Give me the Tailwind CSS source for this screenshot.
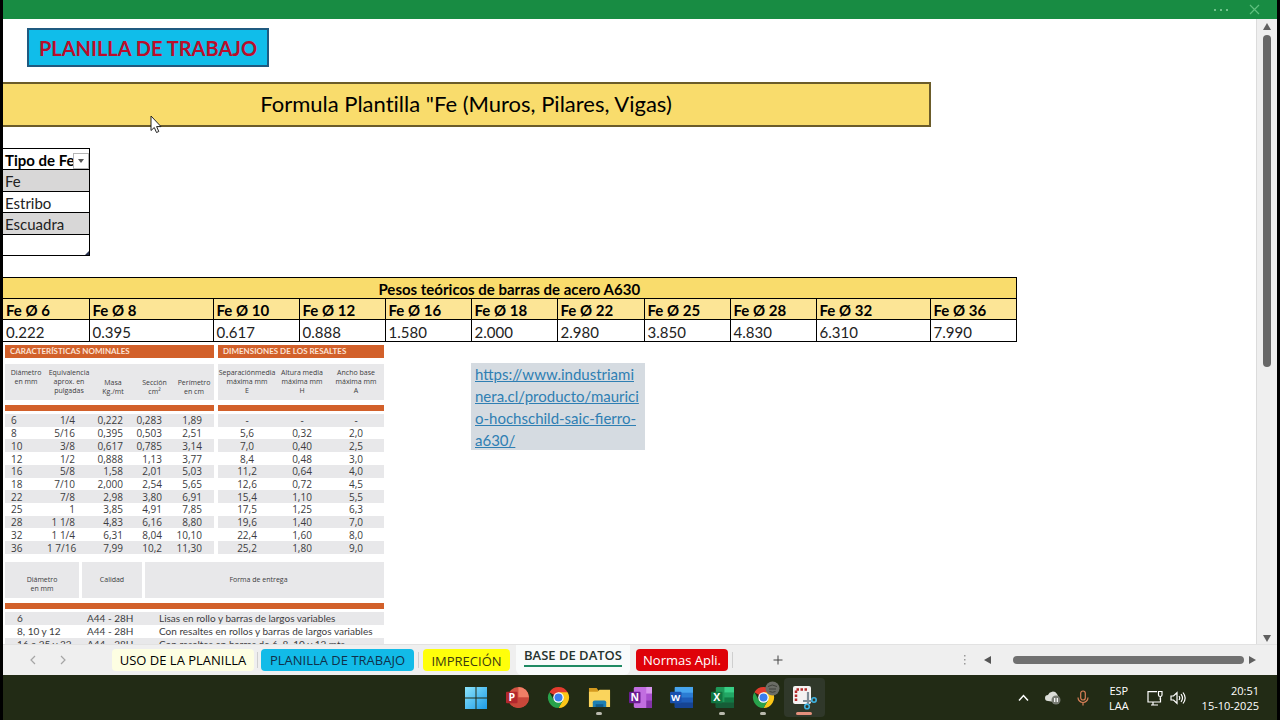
<!DOCTYPE html>
<html lang="es">
<head>
  <meta charset="UTF-8" />
  <meta name="viewport" content="width=device-width, initial-scale=1.0"/>
  <title>Base de datos</title>
  <script src="https://cdn.jsdelivr.net/npm/@tailwindcss/browser@4"></script>
  <script>
    const nominales = [
      ['6', '1/4', '0,222', '0,283', '1,89'],
      ['8', '5/16', '0,395', '0,503', '2,51'],
      ['10', '3/8', '0,617', '0,785', '3,14'],
      ['12', '1/2', '0,888', '1,13', '3,77'],
      ['16', '5/8', '1,58', '2,01', '5,03'],
      ['18', '7/10', '2,000', '2,54', '5,65'],
      ['22', '7/8', '2,98', '3,80', '6,91'],
      ['25', '1', '3,85', '4,91', '7,85'],
      ['28', '1 1/8', '4,83', '6,16', '8,80'],
      ['32', '1 1/4', '6,31', '8,04', '10,10'],
      ['36', '1 7/16', '7,99', '10,2', '11,30'],
    ];
    const resaltes = [
      ['-', '-', '-'],
      ['5,6', '0,32', '2,0'],
      ['7,0', '0,40', '2,5'],
      ['8,4', '0,48', '3,0'],
      ['11,2', '0,64', '4,0'],
      ['12,6', '0,72', '4,5'],
      ['15,4', '1,10', '5,5'],
      ['17,5', '1,25', '6,3'],
      ['19,6', '1,40', '7,0'],
      ['22,4', '1,60', '8,0'],
      ['25,2', '1,80', '9,0'],
    ];
    const pesos = [
      ['Fe Ø 6', '0.222'], ['Fe Ø 8', '0.395'], ['Fe Ø 10', '0.617'], ['Fe Ø 12', '0.888'],
      ['Fe Ø 16', '1.580'], ['Fe Ø 18', '2.000'], ['Fe Ø 22', '2.980'], ['Fe Ø 25', '3.850'],
      ['Fe Ø 28', '4.830'], ['Fe Ø 32', '6.310'], ['Fe Ø 36', '7.990'],
    ];

    function filas(datos, clases) {
      return datos.map(fila => `
        <tr class="odd:bg-[#e8e8ea]">
          ${fila.map((v, i) => `<td class="${clases[i]}">${v}</td>`).join('')}
        </tr>`).join('');
    }

    document.addEventListener('DOMContentLoaded', () => {
      document.getElementById('nominales').innerHTML =
        filas(nominales, ['pl-1.5 text-left', 'pr-4 text-right', 'pr-3 text-right', 'pr-3 text-right', 'pr-3 text-right']);
      document.getElementById('resaltes').innerHTML =
        filas(resaltes, ['text-center', 'text-center', 'text-center']);
      document.getElementById('pesos-nombres').innerHTML =
        pesos.map(p => `<th scope="col" class="border border-black border-l-0 pt-0.5 pl-[3px] text-left font-bold">${p[0]}</th>`).join('');
      document.getElementById('pesos-valores').innerHTML =
        pesos.map(p => `<td class="border border-black border-l-0 pt-0.5 pl-[3px]">${p[1]}</td>`).join('');
    });
  </script>
</head>
<body class="h-screen flex flex-col overflow-hidden bg-black px-[3px] text-black font-['Lato','Liberation_Sans',sans-serif]">

  <!-- Barra de título -->
  <header class="h-[19px] shrink-0 bg-[#188c43] flex items-center justify-end gap-5 pr-4 text-[#8fd6a5]">
    <button aria-label="Más opciones" class="flex gap-1">
      <span class="size-0.5 rounded-full bg-current"></span><span class="size-0.5 rounded-full bg-current"></span><span class="size-0.5 rounded-full bg-current"></span>
    </button>
    <button aria-label="Cerrar">
      <svg class="size-[13px]" viewBox="0 0 13 13" fill="none" stroke="#5fc07e" stroke-width="1.2"><path d="M2 2l9 9M11 2l-9 9"/></svg>
    </button>
  </header>

  <div class="flex-1 min-h-0 flex bg-[#efefef]">
    <!-- Hoja -->
    <main class="relative flex-1 min-w-0 overflow-hidden bg-white pt-[9px]">
      <button class="ml-6 block w-[242px] h-[39px] border-2 border-[#1f5a80] bg-[#10bdea] text-[20px] leading-9 font-bold text-[#bb0d2b]">PLANILLA DE TRABAJO</button>

      <h1 class="mt-[15px] w-[928px] h-[45px] border-2 border-l-0 border-[#6b5c2a] bg-[#f9dc6c] text-center text-[22px] leading-10 [font-variant-ligatures:none]">Formula Plantilla "Fe (Muros, Pilares, Vigas)</h1>

      <table class="mt-[21px] w-[87px] h-[108px] table-fixed border-collapse text-[15px] leading-[18px] text-[#222]">
        <thead>
          <tr>
            <th scope="col" class="relative border border-l-0 border-black pt-0.5 pl-0.5 text-left font-bold whitespace-nowrap text-black">Tipo de Fe
              <button aria-label="Filtrar" class="absolute right-0 bottom-0 size-4 border border-[#b5b5b5] bg-white flex items-center justify-center">
                <svg class="w-2 h-1" viewBox="0 0 8 4"><path d="M1 0h6L4 4z" fill="#555"/></svg>
              </button>
            </th>
          </tr>
        </thead>
        <tbody>
          <tr><td class="border border-l-0 border-black bg-[#d8d7d7] pt-0.5 pl-0.5">Fe</td></tr>
          <tr><td class="border border-l-0 border-black pt-0.5 pl-0.5">Estribo</td></tr>
          <tr><td class="border border-l-0 border-black bg-[#d8d7d7] pt-0.5 pl-0.5">Escuadra</td></tr>
          <tr>
            <td class="relative border border-l-0 border-black pt-0.5 pl-0.5">&nbsp;
              <svg class="absolute right-0 bottom-0 size-1" viewBox="0 0 4 4"><path d="M4 0v4H0z" fill="#27304d"/></svg>
            </td>
          </tr>
        </tbody>
      </table>

      <table class="mt-[21px] w-[1013px] h-[65px] table-fixed border-collapse text-[15px] leading-[18px] text-[#222]">
        <colgroup>
          <col class="w-[86px]"><col class="w-[124px]"><col class="w-[86px]"><col class="w-[86px]"><col class="w-[86px]"><col class="w-[86px]"><col class="w-[87px]"><col class="w-[86px]"><col class="w-[86px]"><col class="w-[114px]"><col class="w-[86px]">
        </colgroup>
        <thead class="text-black">
          <tr><th colspan="11" class="border border-l-0 border-black bg-[#f9dc6c] pt-0.5 text-center font-bold">Pesos teóricos de barras de acero A630</th></tr>
          <tr id="pesos-nombres" class="bg-[#fce596]"></tr>
        </thead>
        <tbody>
          <tr id="pesos-valores"></tr>
        </tbody>
      </table>

      <div class="mt-[3px] flex items-start">
        <!-- Catálogo de barras -->
        <div class="ml-0.5 w-[379px] font-['Open_Sans','Liberation_Sans',sans-serif] text-[10px] leading-3 text-[#3c3c40]">
          <div class="flex gap-1">
            <section class="w-[209px]">
              <h2 class="h-[13px] bg-[#d2602a] pl-[5px] font-['Lato',sans-serif] text-[8px] leading-3 font-bold text-[#fbe3d6]">CARACTERÍSTICAS NOMINALES</h2>
              <table class="mt-1.5 w-full table-fixed border-collapse">
                <colgroup><col class="w-[42px]"><col class="w-[44px]"><col class="w-[44px]"><col class="w-[39px]"><col class="w-[40px]"></colgroup>
                <thead class="bg-[#e8e8ea] text-[7px] leading-[9px]">
                  <tr class="h-9">
                    <th scope="col" class="pt-1 align-top font-normal">Diámetro<br>en mm</th>
                    <th scope="col" class="pt-1 align-top font-normal">Equivalencia<br>aprox. en<br>pulgadas</th>
                    <th scope="col" class="pb-1 align-bottom font-normal">Masa<br>Kg./mt</th>
                    <th scope="col" class="pb-1 align-bottom font-normal">Sección<br>cm²</th>
                    <th scope="col" class="pb-1 align-bottom font-normal">Perímetro<br>en cm</th>
                  </tr>
                </thead>
              </table>
              <div class="mt-[5px] mb-[3px] h-1.5 bg-[#d2602a]"></div>
              <table class="w-full h-[140px] table-fixed border-collapse whitespace-nowrap">
                <colgroup><col class="w-[42px]"><col class="w-[44px]"><col class="w-[44px]"><col class="w-[39px]"><col class="w-[40px]"></colgroup>
                <tbody id="nominales"></tbody>
              </table>
            </section>
            <section class="w-[166px]">
              <h2 class="h-[13px] bg-[#d2602a] pl-[5px] font-['Lato',sans-serif] text-[8px] leading-3 font-bold text-[#fbe3d6]">DIMENSIONES DE LOS RESALTES</h2>
              <table class="mt-1.5 w-full table-fixed border-collapse">
                <colgroup><col class="w-[58px]"><col class="w-[52px]"><col class="w-[56px]"></colgroup>
                <thead class="bg-[#e8e8ea] text-[7px] leading-[9px]">
                  <tr class="h-9">
                    <th scope="col" class="pt-1 align-top font-normal whitespace-nowrap">Separaciónmedia<br>máxima mm<br>E</th>
                    <th scope="col" class="pt-1 align-top font-normal whitespace-nowrap">Altura media<br>máxima mm<br>H</th>
                    <th scope="col" class="pt-1 align-top font-normal whitespace-nowrap">Ancho base<br>máxima mm<br>A</th>
                  </tr>
                </thead>
              </table>
              <div class="mt-[5px] mb-[3px] h-1.5 bg-[#d2602a]"></div>
              <table class="w-full h-[140px] table-fixed border-collapse whitespace-nowrap">
                <colgroup><col class="w-[58px]"><col class="w-[52px]"><col class="w-[56px]"></colgroup>
                <tbody id="resaltes"></tbody>
              </table>
            </section>
          </div>

          <div class="mt-2 grid grid-cols-[74px_60px_1fr] gap-[3px] text-center text-[7px] leading-[9px]">
            <div class="h-9 bg-[#e8e8ea] pt-[13px]">Diámetro<br>en mm</div>
            <div class="h-9 bg-[#e8e8ea] pt-[13px]">Calidad</div>
            <div class="h-9 bg-[#e8e8ea] pt-[13px] pr-3">Forma de entrega</div>
          </div>
          <div class="mt-[5px] mb-[3px] h-1.5 bg-[#d2602a]"></div>
          <table class="w-full table-fixed border-collapse font-['Lato',sans-serif]">
            <colgroup><col class="w-[82px]"><col class="w-[72px]"><col></colgroup>
            <tbody class="whitespace-nowrap leading-[13px]">
              <tr class="bg-[#e8e8ea]"><td class="pl-3">6</td><td>A44 - 28H</td><td>Lisas en rollo y barras de largos variables</td></tr>
              <tr><td class="pl-3">8, 10 y 12</td><td>A44 - 28H</td><td>Con resaltes en rollos y barras de largos variables</td></tr>
              <tr class="bg-[#e8e8ea]"><td class="pl-3">16 a 25 y 32</td><td>A44 - 28H</td><td>Con resaltes en barras de 6, 8, 10 y 12 mts</td></tr>
            </tbody>
          </table>
        </div>

        <a href="https://www.industriaminera.cl/producto/mauricio-hochschild-saic-fierro-a630/" class="mt-[18px] ml-[87px] w-[174px] h-[87px] bg-[#d5dbe1] pl-1 text-[15px] leading-[22px] whitespace-nowrap text-[#2f7fb3] underline">https://www.industriami<br>nera.cl/producto/maurici<br>o-hochschild-saic-fierro-<br>a630/</a>
      </div>

      <!-- Puntero -->
      <svg class="absolute left-[147px] top-[96px] w-3 h-[19px]" viewBox="0 0 12 19"><path d="M1 1v14.500l3.300-3 2.200 5 2.300-1-2.200-4.900H11z" fill="#fff" stroke="#222" stroke-width="1"/></svg>
    </main>

    <!-- Barra vertical -->
    <div class="w-[21px] shrink-0 border-l border-[#dcdcdc] flex flex-col items-center pt-1 pb-px">
      <svg class="size-2" viewBox="0 0 8 8"><path d="M4 0l4 7H0z" fill="#606060"/></svg>
      <div class="mt-1 h-[332px] w-2 rounded-full bg-[#686868]"></div>
      <svg class="mt-auto size-2" viewBox="0 0 8 8"><path d="M0 0h8L4 7z" fill="#606060"/></svg>
    </div>
  </div>

  <!-- Pestañas -->
  <nav class="h-[31px] shrink-0 bg-[#efefef] border-t border-[#e2e2e2] flex items-center font-['Open_Sans','Liberation_Sans',sans-serif] text-[13px] leading-5">
    <button aria-label="Hoja anterior" class="ml-6"><svg class="w-3 h-3" viewBox="0 0 12 12" fill="none" stroke="#a5a5a5" stroke-width="1.200"><path d="M8 2L4 6l4 4"/></svg></button>
    <button aria-label="Hoja siguiente" class="ml-[18px]"><svg class="w-3 h-3" viewBox="0 0 12 12" fill="none" stroke="#a5a5a5" stroke-width="1.200"><path d="M4 2l4 4-4 4"/></svg></button>
    <button class="ml-[43px] w-[142px] h-[22px] rounded bg-[#fdfee2] leading-[18px]">USO DE LA PLANILLA</button>
    <span class="mx-[3px] h-4 w-px bg-[#cfcfcf]"></span>
    <button class="w-[153px] h-[22px] rounded bg-[#12bbe8] leading-[18px] text-[#10304a]">PLANILLA DE TRABAJO</button>
    <span class="mx-1 h-4 w-px bg-[#cfcfcf]"></span>
    <button class="w-[87px] h-[22px] rounded bg-[#ffff0a] pt-0.5 text-[#3a3a10]">IMPRECIÓN</button>
    <button class="ml-1.5 h-full w-[114px] rounded-b-md bg-[#f9fbfb] flex justify-center font-semibold text-[#26332e]"><span class="h-[22px] border-b-2 border-[#1f8a63]">BASE DE DATOS</span></button>
    <button class="ml-1.5 w-[92px] h-[22px] rounded bg-[#df0209] leading-[18px] text-white">Normas Apli.</button>
    <span class="mx-1 h-4 w-px bg-[#cfcfcf]"></span>
    <button aria-label="Nueva hoja" class="ml-9"><svg class="size-[10px]" viewBox="0 0 10 10" stroke="#444" stroke-width="1"><path d="M5 .500v9M.500 5h9"/></svg></button>
    <div class="ml-auto flex items-center pr-[21px]">
      <svg class="w-0.5 h-[10px]" viewBox="0 0 2 10" fill="#999"><path d="M0 0h1.500v1.500H0zM0 4h1.500v1.500H0zM0 8h1.500v1.500H0z"/></svg>
      <svg class="ml-[18px] size-2" viewBox="0 0 8 8"><path d="M7 0v8L0 4z" fill="#555"/></svg>
      <div class="ml-[21px] h-2 w-[231px] rounded-full bg-[#707070]"></div>
      <svg class="ml-1 size-2" viewBox="0 0 8 8"><path d="M1 0v8l7-4z" fill="#606060"/></svg>
    </div>
  </nav>

  <!-- Barra de tareas -->
  <footer class="h-[45px] shrink-0 bg-[#222b15] grid grid-cols-[1fr_auto_1fr] items-stretch text-white font-['Open_Sans','Liberation_Sans',sans-serif]">
    <div></div>
    <div class="flex">
      <button aria-label="Inicio" class="w-[41px] flex justify-center pt-3"><svg class="size-[22px]" viewBox="0 0 22 22"><defs><linearGradient id="win" x1="0" y1="0" x2="1" y2="1"><stop stop-color="#8ce4fb"/><stop offset="1" stop-color="#1c9be8"/></linearGradient></defs><path d="M0 0h10.500v10.500H0zM11.500 0H22v10.500H11.500zM0 11.500h10.500V22H0zM11.500 11.500H22V22H11.500z" fill="url(#win)"/></svg></button>
      <button aria-label="PowerPoint" class="w-[41px] flex justify-center pt-[11px]"><svg class="size-[23px]" viewBox="0 0 24 24"><circle cx="13" cy="12" r="11" fill="#d35343"/><path d="M13 1a11 11 0 0 1 11 11H13z" fill="#f07f66"/><path d="M2 12h22a11 11 0 0 1-22 0z" fill="#c9473a"/><rect y="6" width="12" height="12" rx="1" fill="#b3272d"/><text x="6" y="16" text-anchor="middle" font-size="11" font-weight="700" fill="#fff">P</text></svg></button>
      <button aria-label="Chrome" class="w-[41px] flex justify-center pt-[11px]"><svg class="size-[23px]" viewBox="0 0 24 24"><path d="M12 12L2.470 6.500A11 11 0 0 1 21.530 6.500z" fill="#e33b2e"/><path d="M21.530 6.500A11 11 0 0 1 12 23l4.800-8.300L12 6.500z" fill="#fbc618"/><path d="M2.470 6.500A11 11 0 0 0 12 23l4.760-8.250L12 12l-4.760 2.750z" fill="#28a24b"/><circle cx="12" cy="12" r="5.500" fill="#fff"/><circle cx="12" cy="12" r="4.200" fill="#3b7ded"/></svg></button>
      <button aria-label="Explorador de archivos" class="w-[41px] flex flex-col items-center pt-[11px]"><svg class="size-[23px]" viewBox="0 0 24 24"><path d="M1 2h8l2 3h12v17H1z" fill="#d49a1f"/><path d="M1 6h9l2-2h11v18H1z" fill="#fad45c"/><path d="M5 22v-5q0-2 2-2h10q2 0 2 2v5z" fill="#1d7fb3"/><path d="M8 19h8v3H8z" fill="#125a8a"/></svg><span class="mt-[3px] h-[3px] w-1.5 rounded-full bg-[#b9b9ad]"></span></button>
      <button aria-label="OneNote" class="w-[41px] flex justify-center pt-[11px]"><svg class="size-[23px]" viewBox="0 0 24 24"><rect x="5" y="1" width="19" height="22" rx="1.500" fill="#c26ee0"/><path d="M18 1h6v7h-6z" fill="#d895ee"/><path d="M18 8h6v7h-6z" fill="#a94fce"/><path d="M18 15h6v8h-6z" fill="#8433a8"/><rect y="6" width="12" height="12" rx="1" fill="#6c1c94"/><text x="6" y="16" text-anchor="middle" font-size="11" font-weight="700" fill="#fff">N</text></svg></button>
      <button aria-label="Word" class="w-[41px] flex justify-center pt-[11px]"><svg class="size-[23px]" viewBox="0 0 24 24"><rect x="5" y="1" width="19" height="22" rx="1.500" fill="#2b7cd3"/><path d="M5 1h19v6H5z" fill="#47a5ee"/><path d="M5 12h19v5H5z" fill="#1e5cb8"/><path d="M5 17h19v6H5z" fill="#164494"/><rect y="6" width="12" height="12" rx="1" fill="#1950ad"/><text x="6" y="16" text-anchor="middle" font-size="10" font-weight="700" fill="#fff">W</text></svg></button>
      <button aria-label="Excel" class="w-[41px] flex flex-col items-center pt-[11px]"><svg class="size-[23px]" viewBox="0 0 24 24"><rect x="5" y="1" width="19" height="22" rx="1.500" fill="#1f9a5a"/><path d="M14 1h10v6H14z" fill="#38cf86"/><path d="M14 7h10v5H14z" fill="#22a765"/><path d="M14 12h10v5H14z" fill="#127a45"/><path d="M5 17h19v6H5z" fill="#165c37"/><rect y="6" width="12" height="12" rx="1" fill="#107641"/><text x="6" y="16" text-anchor="middle" font-size="11" font-weight="700" fill="#fff">X</text></svg><span class="mt-[3px] h-[3px] w-1.5 rounded-full bg-[#b9b9ad]"></span></button>
      <button aria-label="Chrome, perfil" class="relative w-[41px] flex flex-col items-center pt-[11px]"><svg class="size-[23px]" viewBox="0 0 24 24"><path d="M12 12L2.470 6.500A11 11 0 0 1 21.530 6.500z" fill="#e33b2e"/><path d="M21.530 6.500A11 11 0 0 1 12 23l4.800-8.300L12 6.500z" fill="#fbc618"/><path d="M2.470 6.500A11 11 0 0 0 12 23l4.760-8.250L12 12l-4.760 2.750z" fill="#28a24b"/><circle cx="12" cy="12" r="5.500" fill="#fff"/><circle cx="12" cy="12" r="4.200" fill="#3b7ded"/></svg><svg class="absolute left-[22px] top-1.5 size-[15px]" viewBox="0 0 15 15"><circle cx="7.500" cy="7.500" r="7" fill="#6b6d66"/><path d="M3 5.500q4-3 9 0M4 8h7M4.500 10.500q3 1.500 6 0" fill="none" stroke="#3f413b" stroke-width="1"/></svg><span class="mt-[3px] h-[3px] w-1.5 rounded-full bg-[#b9b9ad]"></span></button>
      <button aria-label="Recortes" class="my-[3px] w-[41px] rounded bg-[#30382a] flex flex-col items-center pt-2"><svg class="w-[25px] h-6" viewBox="0 0 25 24"><rect x="1" y="0" width="18" height="18" rx="2" fill="#f4f2f2"/><path d="M4 15V3.500h11" fill="none" stroke="#b52a2a" stroke-width="2.500" stroke-dasharray="2.500 1.500"/><path d="M16 6v12M11 15h9" stroke="#7e8c96" stroke-width="2.200" fill="none"/><circle cx="15" cy="20.500" r="2.300" fill="none" stroke="#3db2e2" stroke-width="1.600"/><circle cx="22" cy="14" r="2.200" fill="none" stroke="#3db2e2" stroke-width="1.600"/></svg><span class="mt-0.5 h-[3px] w-4 rounded-full bg-[#e5907c]"></span></button>
    </div>
    <div class="flex items-center justify-end pr-[18px] text-[11px] leading-[15px]">
      <svg class="w-[11px] h-2" viewBox="0 0 11 8" fill="none" stroke="#fff" stroke-width="1.500"><path d="M1 6.500l4.500-5 4.500 5"/></svg>
      <svg class="ml-4 w-4 h-[14px]" viewBox="0 0 16 14"><path d="M3 10a3 3 0 0 1 0-6 5 5 0 0 1 9-1l2 4-4 4z" fill="#dcded8"/><circle cx="11" cy="9" r="4.500" fill="#777b72"/><path d="M9.700 7v4M12.300 7v4" stroke="#fff" stroke-width="1.200"/></svg>
      <svg class="ml-4 w-3 h-4" viewBox="0 0 12 16" fill="none" stroke="#d98058" stroke-width="1.200"><rect x="3.700" y="1" width="4.600" height="9" rx="2.300"/><path d="M1 7.500a5 5 0 0 0 10 0M6 12.500V15.500"/></svg>
      <span class="ml-5 text-center">ESP<br>LAA</span>
      <svg class="ml-[18px] size-4" viewBox="0 0 16 16" fill="none" stroke="#fff" stroke-width="1.200"><path d="M10 1.600H1v10.400h12.500V8M4 15h7M6 12v3"/><path d="M11.500 1.500h3.500v3.500q0 1.500-1.750 1.500t-1.750-1.500zM13.300 6.500V10"/></svg>
      <svg class="ml-[7px] w-4 h-[14px]" viewBox="0 0 16 14" fill="none" stroke="#fff" stroke-width="1.200"><path d="M1 5h2.500L7 1.700v10.600L3.500 9H1zM9 5q1.500 2 0 4M11 3.200q3 3.800 0 7.600M13 1.500q4.300 5.500 0 11"/></svg>
      <time datetime="2025-10-15T20:51" class="ml-4 text-right">20:51<br>15-10-2025</time>
    </div>
  </footer>

</body>
</html>
